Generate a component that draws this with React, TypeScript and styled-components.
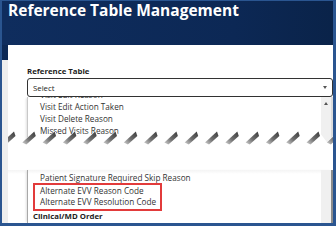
import React from 'react';
import styled, { createGlobalStyle } from 'styled-components';

const GlobalStyle = createGlobalStyle`
  html, body {
    margin: 0;
    padding: 0;
    background: #ffffff;
    font-family: 'Open Sans', 'Noto Sans', sans-serif;
  }
`;

const Frame = styled.div`
  width: 336px;
  height: 226px;
  box-sizing: border-box;
  border-style: solid;
  border-color: #2a5590;
  border-width: 1px 3px 3px 2px;
  background: #f0f0f0;
  display: flex;
  flex-direction: column;
  overflow: hidden;
`;

const Header = styled.div`
  height: 44px;
  flex: none;
  background: linear-gradient(90deg, #0f2d5e 0%, #0c2855 70%, #0a2349 100%);
`;

const Title = styled.h1`
  margin: 0;
  padding-left: 6px;
  color: #ffffff;
  font-size: 15.5px;
  line-height: 18px;
  font-weight: 700;
  white-space: nowrap;
`;

const Body = styled.div`
  flex: 1;
  display: flex;
  min-height: 0;
`;

const Gutter = styled.div`
  width: 6px;
  flex: none;
  background: linear-gradient(180deg, #0c2855 0 15px, #eeeeee 15px);
`;

const Card = styled.div`
  flex: 1;
  background: #ffffff;
  display: flex;
  flex-direction: column;
  min-width: 0;
`;

const TopPiece = styled.div`
  position: relative;
  height: 100px;
  flex: none;
  box-sizing: border-box;
  padding: 21px 0 0 19px;
  display: flex;
  flex-direction: column;
  overflow: hidden;
`;

const Label = styled.div`
  font-size: 7.8px;
  line-height: 10px;
  font-weight: 700;
  color: #222;
`;

const SelectBox = styled.div`
  margin-top: 2px;
  height: 19px;
  flex: none;
  box-sizing: border-box;
  border: 1px solid #333;
  border-radius: 3px;
  display: flex;
  align-items: center;
  justify-content: space-between;
  padding: 0 5px;
  font-size: 7.8px;
  color: #222;
`;

const Caret = styled.span<{ $up?: boolean }>`
  width: 0;
  height: 0;
  border-left: 2.5px solid transparent;
  border-right: 2.5px solid transparent;
  ${(p) => (p.$up ? 'border-bottom: 3px solid #555;' : 'border-top: 3px solid #555;')}
`;

const ListRow = styled.div<{ $fade?: boolean }>`
  flex: 1;
  display: flex;
  min-height: 0;
  border-left: 1px solid ${(p) => (p.$fade ? '#a8a8a8' : '#c8c8c8')};
  box-shadow: -2px 0 2px -1px rgba(0, 0, 0, 0.12);
`;

const Items = styled.div<{ $offset: number }>`
  flex: 1;
  overflow: hidden;
  display: flex;
  flex-direction: column;

  & > :first-child {
    margin-top: ${(p) => p.$offset}px;
  }
`;

const Item = styled.div<{ $tight?: boolean }>`
  flex: none;
  padding-left: 12px;
  font-size: 8.2px;
  line-height: ${(p) => (p.$tight ? 11 : 12)}px;
  color: #333;
  white-space: nowrap;
`;

const Scrollbar = styled.div<{ $edge?: boolean }>`
  width: 10px;
  flex: none;
  background: #f0f0f0;
  border-right: 2px solid ${(p) => (p.$edge ? '#8c8c8c' : '#dcdcdc')};
  display: flex;
  justify-content: center;
  align-items: flex-start;
  padding-top: 5px;
  box-sizing: content-box;
`;

const Gap = styled.div`
  height: 25px;
  flex: none;
`;

const LowerPiece = styled.div`
  flex: 1;
  display: flex;
  flex-direction: column;
  padding-left: 19px;
  min-height: 0;
  background: linear-gradient(180deg, #f4f4f4 0, #ffffff 4px);
`;

const Highlight = styled.div`
  flex: none;
  margin: -1px 0 0 5px;
  width: 129px;
  box-sizing: border-box;
  border: 2px solid #e23b3b;
  padding: 0 0 1.5px 0;

  ${Item} {
    padding-left: 5px;
  }
`;

const GroupLabel = styled.div`
  padding-left: 5px;
  font-size: 7.8px;
  line-height: 11px;
  font-weight: 700;
  color: #222;
`;

const TornSvg = styled.svg`
  position: absolute;
  left: 0;
  bottom: 0;
  display: block;
`;

const TornEdge: React.FC = () => {
  const w = 325;
  const h = 16;
  const teeth = Array.from({ length: 17 }, (_, i) => -6 + i * 20.3);
  const outline = [`0,${h}`];
  teeth.forEach((v) => {
    outline.push(`${v},13`, `${v + 12},2`);
  });
  outline.push(`${w},13`, `${w},${h}`);
  return (
    <TornSvg width={w} height={h} viewBox={`0 0 ${w} ${h}`}>
      <defs>
        <linearGradient id="shade" x1="1" y1="0" x2="0" y2="1">
          <stop offset="0" stopColor="#3a3a3a" />
          <stop offset="0.55" stopColor="#707070" />
          <stop offset="1" stopColor="#d4d4d4" />
        </linearGradient>
      </defs>
      <polygon points={outline.join(' ')} fill="#ffffff" />
      {teeth.map((v) => (
        <polygon
          key={v}
          points={`${v},13.5 ${v + 12},2.5 ${v + 13.5},7 ${v + 4},15.5`}
          fill="url(#shade)"
        />
      ))}
    </TornSvg>
  );
};

const App: React.FC = () => {
  return (
    <>
      <GlobalStyle />
      <Frame>
        <Header>
          <Title>Reference Table Management</Title>
        </Header>
        <Body>
          <Gutter />
          <Card>
            <TopPiece>
              <Label>Reference Table</Label>
              <SelectBox>
                Select
                <Caret />
              </SelectBox>
              <ListRow>
                <Items $offset={-8}>
                  <Item>Visit Edit Reason</Item>
                  <Item>Visit Edit Action Taken</Item>
                  <Item>Visit Delete Reason</Item>
                  <Item>Missed Visits Reason</Item>
                </Items>
                <Scrollbar>
                  <Caret $up />
                </Scrollbar>
              </ListRow>
              <TornEdge />
            </TopPiece>
            <Gap />
            <LowerPiece>
              <ListRow $fade>
                <Items $offset={2}>
                  <Item>Patient Signature Required Skip Reason</Item>
                  <Highlight>
                    <Item $tight>Alternate EVV Reason Code</Item>
                    <Item $tight>Alternate EVV Resolution Code</Item>
                  </Highlight>
                  <GroupLabel>Clinical/MD Order</GroupLabel>
                </Items>
                <Scrollbar $edge />
              </ListRow>
            </LowerPiece>
          </Card>
        </Body>
      </Frame>
    </>
  );
};

export default App;
